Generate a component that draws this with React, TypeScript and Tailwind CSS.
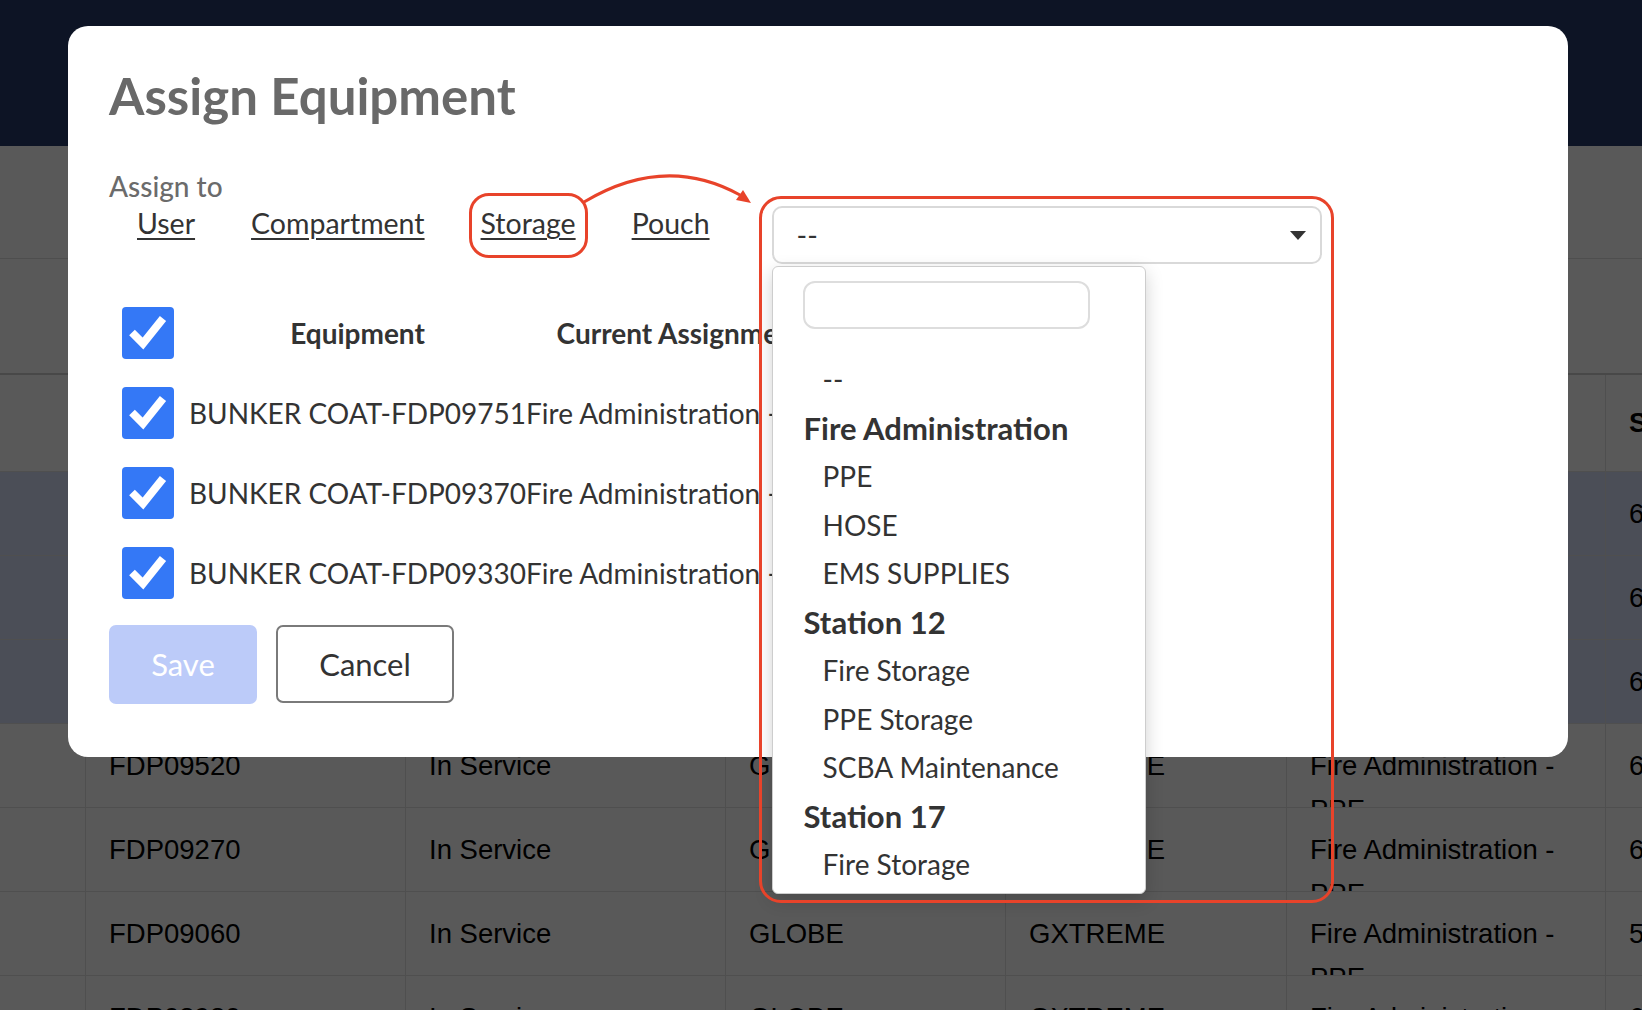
import React from "react";

type InventoryRow = {
  id: string;
  status: string;
  brand: string;
  model: string;
  assignment: string;
  inspected: string;
  selected?: boolean;
};

const inventory: InventoryRow[] = [
  { id: "FDP09751", status: "In Service", brand: "GLOBE", model: "GXTREME", assignment: "Fire Administration - PPE", inspected: "6/14/2021", selected: true },
  { id: "FDP09370", status: "In Service", brand: "GLOBE", model: "GXTREME", assignment: "Fire Administration - PPE", inspected: "6/14/2021", selected: true },
  { id: "FDP09330", status: "In Service", brand: "GLOBE", model: "GXTREME", assignment: "Fire Administration - PPE", inspected: "6/14/2021", selected: true },
  { id: "FDP09520", status: "In Service", brand: "GLOBE", model: "GXTREME", assignment: "Fire Administration - PPE", inspected: "6/14/2021" },
  { id: "FDP09270", status: "In Service", brand: "GLOBE", model: "GXTREME", assignment: "Fire Administration - PPE", inspected: "6/14/2021" },
  { id: "FDP09060", status: "In Service", brand: "GLOBE", model: "GXTREME", assignment: "Fire Administration - PPE", inspected: "5/28/2021" },
  { id: "FDP08980", status: "In Service", brand: "GLOBE", model: "GXTREME", assignment: "Fire Administration - PPE", inspected: "6/02/2021" },
];

const selectedEquipment = [
  { name: "BUNKER COAT-FDP09751", assignment: "Fire Administration - PPE" },
  { name: "BUNKER COAT-FDP09370", assignment: "Fire Administration - PPE" },
  { name: "BUNKER COAT-FDP09330", assignment: "Fire Administration - PPE" },
];

const storageGroups = [
  { name: "Fire Administration", items: ["PPE", "HOSE", "EMS SUPPLIES"] },
  { name: "Station 12", items: ["Fire Storage", "PPE Storage", "SCBA Maintenance"] },
  { name: "Station 17", items: ["Fire Storage"] },
];

const cols = "grid grid-cols-[85px_320px_320px_280px_281px_319px_1fr]";

function CheckBox() {
  return (
    <svg width="52" height="52" viewBox="0 0 52 52" className="block">
      <rect width="52" height="52" rx="4" fill="#3478f6" />
      <path d="M10 25.5 L21 36.5 L41 11.5" fill="none" stroke="#fff" strokeWidth="8" strokeLinejoin="miter" />
    </svg>
  );
}

function Cell({ children, first }: { children?: React.ReactNode; first?: boolean }) {
  return (
    <div className={`h-full overflow-hidden px-[23px] pt-[20px] leading-[44px] ${first ? "" : "border-l border-[#e2e2e2]"}`}>
      {children}
    </div>
  );
}

function InventoryTable() {
  return (
    <div className="[font-family:'Liberation_Sans',Arial,sans-serif] text-[27.5px] text-black">
      <div className="h-[113px] border-b border-[#dedede]" />
      <div className="h-[114px]" />
      <div className={`${cols} h-[98px] border-t-2 border-[#cfcfcf] font-bold`}>
        <div />
        {["Serial #", "Status", "Brand", "Model", "Assignment", "Size"].map((h) => (
          <div key={h} className="flex items-center border-l border-[#e2e2e2] px-[23px]">
            {h}
          </div>
        ))}
      </div>
      {inventory.map((r) => (
        <div
          key={r.id}
          className={`${cols} h-[84px] border-t border-[#e2e2e2] ${r.selected ? "bg-[#d6dff9]" : ""}`}
        >
          <Cell first />
          <Cell>{r.id}</Cell>
          <Cell>{r.status}</Cell>
          <Cell>{r.brand}</Cell>
          <Cell>{r.model}</Cell>
          <Cell>
            <span className="block">Fire Administration -</span>
            <span className="block">PPE</span>
          </Cell>
          <Cell>{r.inspected}</Cell>
        </div>
      ))}
    </div>
  );
}

function StorageMenu() {
  return (
    <div className="absolute left-0 top-[60px] h-[628px] w-[374px] rounded-[6px] border border-[#cdcdcd] bg-white pl-[30px] pt-[14px] shadow-[0_6px_18px_rgba(0,0,0,0.18)]">
      <div className="h-[48px] w-[287px] rounded-[12px] border-2 border-[#dddddd] bg-white" />
      <ul className="mt-[26px] text-[#333]">
        <li className="pl-[20px] text-[28px] leading-[48.5px]">--</li>
        {storageGroups.map((g) => (
          <li key={g.name}>
            <div className="pl-[1px] text-[31px] font-bold leading-[48.5px]">{g.name}</div>
            <ul>
              {g.items.map((item) => (
                <li key={item} className="pl-[20px] text-[28px] leading-[48.5px]">
                  {item}
                </li>
              ))}
            </ul>
          </li>
        ))}
      </ul>
    </div>
  );
}

export default function App() {
  const targets = ["User", "Compartment", "Storage", "Pouch"];

  return (
    <div className="relative h-[1010px] w-[1642px] overflow-hidden bg-white">
      <header className="h-[146px] bg-[#25396a]" />
      <InventoryTable />

      <div className="absolute inset-0 bg-black/65" />

      <div className="absolute left-[68px] top-[26px] w-[1500px] rounded-[20px] bg-white px-[41px] pb-[53px] pt-[40px] [font-family:Lato,sans-serif]">
        <h2 className="text-[51px] font-bold leading-[60px] text-[#696969]">Assign Equipment</h2>

        <div className="mt-[43px] text-[28px] font-medium leading-[34px] text-[#6b6b6b]">Assign to</div>
        <div className="mt-[3px] flex items-start text-[28.5px] leading-[34px] text-[#333]">
          {targets.map((t) => (
            <span key={t} className="relative px-[28px]">
              <a href="#" className="underline decoration-2 underline-offset-[4px]">
                {t}
              </a>
              {t === "Storage" && (
                <span className="pointer-events-none absolute left-[16px] top-[-13px] h-[65px] w-[119px] rounded-[20px] border-[3px] border-[#e8432a]" />
              )}
            </span>
          ))}

          <div className="relative ml-[34px]">
            <div className="flex h-[58px] w-[550px] items-center justify-between rounded-[10px] border-2 border-[#d9d9d9] bg-white pl-[23px] pr-[14px]">
              <span>--</span>
              <svg width="16" height="9" viewBox="0 0 16 9">
                <path d="M0 0H16L8 9Z" fill="#333" />
              </svg>
            </div>
            <StorageMenu />
            <span className="pointer-events-none absolute left-[-13px] top-[-10px] h-[707px] w-[575px] rounded-[22px] border-[3px] border-[#e8432a]" />
          </div>
        </div>

        <table className="mt-[29px] border-collapse text-[28px] text-[#333]">
          <thead>
            <tr className="h-[80px]">
              <th className="p-0 pl-[13px] pr-[15px] align-middle">
                <CheckBox />
              </th>
              <th className="p-0 text-center align-middle font-bold">Equipment</th>
              <th className="p-0 text-center align-middle font-bold">Current Assignment</th>
            </tr>
          </thead>
          <tbody>
            {selectedEquipment.map((e) => (
              <tr key={e.name} className="h-[80px]">
                <td className="p-0 pl-[13px] pr-[15px] align-middle">
                  <CheckBox />
                </td>
                <td className="whitespace-nowrap p-0 align-middle">{e.name}</td>
                <td className="whitespace-nowrap p-0 align-middle">{e.assignment}</td>
              </tr>
            ))}
          </tbody>
        </table>

        <div className="mt-[12px] flex items-start gap-[19px] text-[31px]">
          <button className="h-[79px] w-[148px] rounded-[7px] bg-[#bccbf9] text-white">Save</button>
          <button className="h-[78px] w-[178px] rounded-[7px] border-2 border-[#7a7a7a] bg-white text-[#333]">
            Cancel
          </button>
        </div>
      </div>

      {/* arrow from the Storage tab to the location picker */}
      <svg
        className="pointer-events-none absolute left-[575px] top-[160px] overflow-visible"
        width="185"
        height="50"
        viewBox="0 0 185 50"
      >
        <path d="M9 42 Q90 -6.5 165 35" fill="none" stroke="#e8432a" strokeWidth="3" />
        <path d="M176 43 L161 40 L168 30 Z" fill="#e8432a" />
      </svg>
    </div>
  );
}
